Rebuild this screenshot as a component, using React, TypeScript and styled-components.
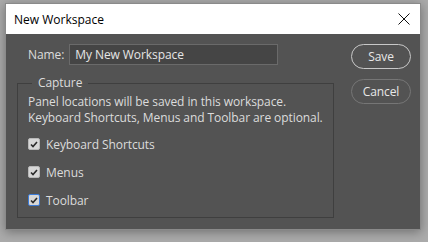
import React from 'react';
import styled, { createGlobalStyle } from 'styled-components';

const GlobalStyle = createGlobalStyle`
    html, body {
        margin: 0;
        padding: 0;
        background: #ababab;
        font-family: "Open Sans", "Noto Sans", sans-serif;
    }
`;

const Page = styled.div`
    width: 428px;
    height: 242px;
    padding: 3px 0 0 5px;
    box-sizing: border-box;
`;

const Window = styled.div`
    width: 416px;
    height: 227px;
    border: 1px solid #8a8a8a;
    box-sizing: border-box;
    background: #535353;
    box-shadow: 0 2px 10px rgba(0, 0, 0, 0.35);
    display: flex;
    flex-direction: column;
`;

const TitleBar = styled.div`
    height: 30px;
    background: #ffffff;
    display: flex;
    align-items: center;
    justify-content: space-between;
    padding: 0 10px 0 8px;
    font-size: 12px;
    color: #000;
`;

const CloseIcon = styled.svg`
    width: 12px;
    height: 12px;
`;

const Body = styled.div`
    flex: 1;
    display: flex;
    padding: 10px 10px 0 11px;
    gap: 19px;
    letter-spacing: -0.08px;
`;

const LeftColumn = styled.div`
    width: 315px;
    display: flex;
    flex-direction: column;
`;

const NameRow = styled.div`
    display: flex;
    align-items: center;
    gap: 5px;
    padding-left: 11px;
    color: #dcdcdc;
    font-size: 12px;
`;

const NameInput = styled.div`
    width: 209px;
    height: 21px;
    box-sizing: border-box;
    background: #454545;
    border: 1px solid #6a6a6a;
    color: #e6e6e6;
    padding: 0 5px;
    line-height: 19px;
`;

const Fieldset = styled.fieldset`
    margin: 11px 0 0 0;
    padding: 4px 10px 0 10px;
    height: 142px;
    box-sizing: border-box;
    border: 1px solid #3f3f3f;
    color: #dcdcdc;
    font-size: 12px;
`;

const Legend = styled.legend`
    padding: 0 6px;
    margin-left: 4px;
    line-height: 14px;
`;

const Description = styled.p`
    margin: 0;
    line-height: 16px;
    white-space: nowrap;
`;

const CheckList = styled.div`
    display: flex;
    flex-direction: column;
    gap: 12px;
    margin-top: 10px;
`;

const CheckRow = styled.div`
    display: flex;
    align-items: center;
    gap: 6px;
    height: 16px;
`;

const Box = styled.span<{ $focused?: boolean }>`
    width: 12px;
    height: 12px;
    box-sizing: border-box;
    background: #d7d7d7;
    border: 1px solid ${p => (p.$focused ? '#3b7bd8' : '#b8b8b8')};
    border-radius: 2px;
    display: flex;
    align-items: center;
    justify-content: center;
`;

const RightColumn = styled.div`
    display: flex;
    flex-direction: column;
    gap: 10px;
`;

const Button = styled.div<{ $primary?: boolean }>`
    width: 60px;
    height: 25px;
    box-sizing: border-box;
    border-radius: 13px;
    border: 1px solid ${p => (p.$primary ? '#c8c8c8' : '#767676')};
    color: #e8e8e8;
    font-size: 12px;
    display: flex;
    align-items: center;
    justify-content: center;
`;

const Check = () => (
    <svg width="8" height="7" viewBox="0 0 8 7">
        <path d="M1 3.5 L3 5.5 L7 1" stroke="#2a2a2a" strokeWidth="1.6" fill="none" />
    </svg>
);

const App = function () {
    const options = [
        { label: 'Keyboard Shortcuts', focused: false },
        { label: 'Menus', focused: false },
        { label: 'Toolbar', focused: true },
    ];
    return <>
        <GlobalStyle />
        <Page>
            <Window>
                <TitleBar>
                    <span>New Workspace</span>
                    <CloseIcon viewBox="0 0 12 12">
                        <path d="M0.5 0.5 L11.5 11.5 M11.5 0.5 L0.5 11.5" stroke="#111" strokeWidth="1" />
                    </CloseIcon>
                </TitleBar>
                <Body>
                    <LeftColumn>
                        <NameRow>
                            <span>Name:</span>
                            <NameInput>My New Workspace</NameInput>
                        </NameRow>
                        <Fieldset>
                            <Legend>Capture</Legend>
                            <Description>
                                Panel locations will be saved in this workspace.<br />
                                Keyboard Shortcuts, Menus and Toolbar are optional.
                            </Description>
                            <CheckList>
                                {options.map(o => (
                                    <CheckRow key={o.label}>
                                        <Box $focused={o.focused}><Check /></Box>
                                        <span>{o.label}</span>
                                    </CheckRow>
                                ))}
                            </CheckList>
                        </Fieldset>
                    </LeftColumn>
                    <RightColumn>
                        <Button $primary>Save</Button>
                        <Button>Cancel</Button>
                    </RightColumn>
                </Body>
            </Window>
        </Page>
    </>;
};

export default App;
